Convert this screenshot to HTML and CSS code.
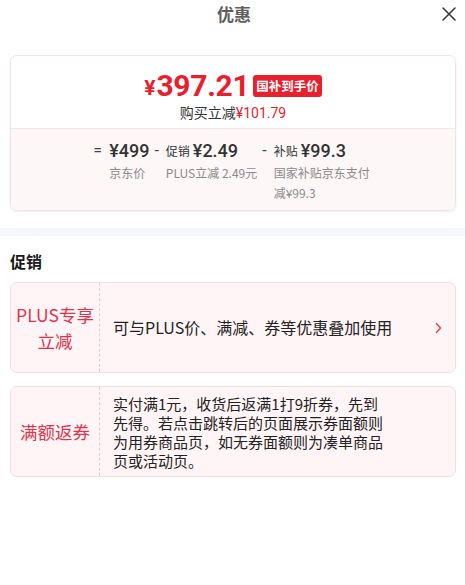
FILE: index.html
```html
<!DOCTYPE html>
<html lang="zh-CN">
<head>
<meta charset="utf-8">
<title>优惠</title>
<link rel="stylesheet" href="styles.css">
</head>
<body>
<div class="sheet">
  <header class="hd">
    <span class="hd-side"></span>
    <h1 class="title">优惠</h1>
    <span class="hd-side hd-right">
      <svg class="close" width="14" height="14" viewBox="0 0 14 14"><path d="M1 1 L13 13 M13 1 L1 13" stroke="#333" stroke-width="1.5" fill="none" stroke-linecap="round"/></svg>
    </span>
  </header>

  <section class="summary">
    <div class="summary-top">
      <div class="final"><span class="cur">¥</span><span class="amt">397.21</span><span class="badge">国补到手价</span></div>
      <div class="saved">购买立减<span class="red">¥101.79</span></div>
    </div>
    <div class="summary-bottom">
      <div class="calc">
        <span class="op op-first">=</span>
        <div class="term">
          <div class="val">¥499</div>
          <div class="lbl">京东价</div>
        </div>
        <span class="op">-</span>
        <div class="term">
          <div class="val"><span class="tag">促销</span>¥2.49</div>
          <div class="lbl nowrap">PLUS立减 2.49元</div>
        </div>
        <span class="op">-</span>
        <div class="term term-wrap">
          <div class="val"><span class="tag">补贴</span>¥99.3</div>
          <div class="lbl">国家补贴京东支付减¥99.3</div>
        </div>
      </div>
    </div>
  </section>

  <div class="band"></div>

  <h2 class="sec-title">促销</h2>

  <div class="promo promo-plus">
    <div class="promo-name">PLUS专享<br>立减</div>
    <div class="promo-desc promo-desc-lg">可与PLUS价、满减、券等优惠叠加使用</div>
    <div class="promo-arrow">
      <svg width="7" height="12" viewBox="0 0 7 12"><path d="M1.5 1.5 L5.5 6 L1.5 10.5" stroke="#d8485c" stroke-width="1.5" fill="none" stroke-linecap="round" stroke-linejoin="round"/></svg>
    </div>
  </div>

  <div class="promo promo-coupon">
    <div class="promo-name">满额返券</div>
    <div class="promo-desc">实付满1元，收货后返满1打9折券，先到<br>先得。若点击跳转后的页面展示券面额则<br>为用券商品页，如无券面额则为凑单商品<br>页或活动页。</div>
  </div>
</div>
</body>
</html>
```

FILE: styles.css
```css
* { box-sizing: border-box; }
html, body { margin: 0; padding: 0; background: #fff; }
body {
  font-family: "Noto Sans CJK SC", "Noto Sans", sans-serif;
  color: #333;
  width: 465px;
}
.sheet { padding: 0 9px 0 10px; }

.hd {
  display: grid;
  grid-template-columns: 1fr auto 1fr;
  align-items: center;
  height: 28px;
}
.title {
  margin: 0;
  font-size: 17px;
  font-weight: 700;
  color: #5e5e5e;
  line-height: 28px;
  transform: translateX(1px);
}
.hd-right { justify-self: end; display: flex; padding-right: 0; }
.close { display: block; }

.summary {
  margin-top: 27px;
  border: 1px solid #f1e2e6;
  border-radius: 7px;
  overflow: hidden;
  box-shadow: 0 1px 2px rgba(200, 170, 178, 0.25);
}
.summary-top {
  background: #fff;
  padding: 11px 0 6px;
  border-bottom: 1px solid #f4e8ea;
  text-align: center;
}
.final {
  display: flex;
  justify-content: center;
  align-items: center;
  height: 36px;
  color: #e8202e;
}
.cur {
  font-family: "Roboto", "Noto Sans", sans-serif;
  font-weight: 700;
  font-size: 21px;
  margin-top: 5px;
  margin-right: 1px;
}
.amt {
  font-family: "Roboto", "Noto Sans", sans-serif;
  font-weight: 700;
  font-size: 30px;
  letter-spacing: -0.3px;
}
.badge {
  margin-left: 4px;
  margin-top: 2px;
  background: #e8202e;
  color: #fff;
  font-size: 12.5px;
  font-weight: 700;
  line-height: 22px;
  height: 22px;
  padding: 0 3px;
  border-radius: 3px;
}
.saved {
  font-size: 14px;
  line-height: 18px;
  color: #333;
}
.red { color: #e8202e; font-family: "Roboto", "Noto Sans", sans-serif; }

.summary-bottom {
  background: #fdf7f8;
  padding: 10px 0 8px;
}
.calc {
  display: flex;
  justify-content: center;
  align-items: flex-start;
  transform: translateX(-1px);
}
.op {
  font-family: "Roboto", "Noto Sans", sans-serif;
  font-size: 16px;
  line-height: 24px;
  color: #444;
  margin: 0 7px 0 5px;
}
.op-first { margin-left: 0; margin-right: 7px; }
.term { display: flex; flex-direction: column; }
.term-wrap { width: 97px; }
.val {
  font-family: "Roboto", "Noto Sans", sans-serif;
  font-weight: 500;
  font-size: 18px;
  line-height: 24px;
  color: #333;
  white-space: nowrap;
}
.tag {
  font-family: "Noto Sans CJK SC", sans-serif;
  font-size: 12px;
  font-weight: 400;
  color: #333;
  margin-right: 3px;
  vertical-align: 1px;
}
.lbl {
  font-size: 12px;
  line-height: 19.5px;
  color: #8a8a8a;
}
.nowrap { white-space: nowrap; }

.band {
  height: 8px;
  margin: 17px -9px 0 -10px;
  background: #f6f7fb;
}
.sec-title {
  margin: 0;
  padding-top: 14px;
  font-size: 16px;
  font-weight: 700;
  line-height: 22px;
  color: #1a1a1a;
}

.promo {
  display: flex;
  align-items: stretch;
  border: 1px solid #f1dde2;
  border-radius: 7px;
  background: #fff5f6;
}
.promo-plus { margin-top: 10px; height: 91px; }
.promo-coupon { margin-top: 13px; height: 91px; }
.promo-name {
  width: 89px;
  flex: none;
  display: flex;
  align-items: center;
  justify-content: center;
  text-align: center;
  border-right: 1px dashed #ecc8cf;
  color: #e0334b;
  font-size: 17.5px;
  line-height: 26px;
}
.promo-desc {
  flex: 1;
  display: flex;
  align-items: center;
  padding: 0 0 0 13px;
  font-size: 15px;
  line-height: 19px;
  color: #222;
}
.promo-desc-lg { font-size: 16px; }
.promo-arrow {
  display: flex;
  align-items: center;
  padding: 0 13px 0 0;
}
```
